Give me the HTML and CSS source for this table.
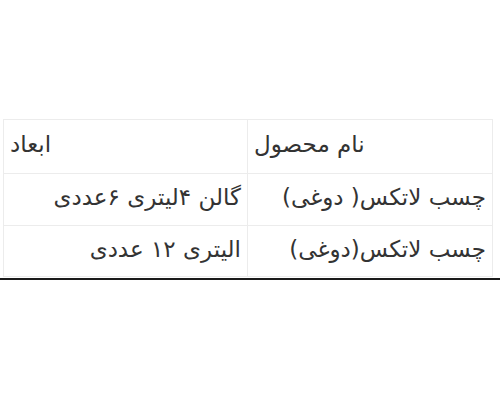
FILE: index.html
```html
<!DOCTYPE html>
<html lang="fa" dir="rtl">
<head>
<meta charset="utf-8">
<link rel="stylesheet" href="styles.css">
</head>
<body>
<div class="page">
  <table class="spec">
    <tr class="head">
      <th class="name">نام محصول</th>
      <th class="dim">ابعاد</th>
    </tr>
    <tr class="r1">
      <td class="name">چسب لاتکس( دوغی)</td>
      <td class="dim">گالن ۴لیتری ۶عددی</td>
    </tr>
    <tr class="r2">
      <td class="name">چسب لاتکس(دوغی)</td>
      <td class="dim">الیتری ۱۲ عددی</td>
    </tr>
  </table>
  <div class="rule"></div>
</div>
</body>
</html>
```
FILE: styles.css
```css
html, body {
  margin: 0;
  padding: 0;
  background: #ffffff;
}
.page {
  width: 500px;
  height: 400px;
  padding-top: 119px;
  box-sizing: border-box;
  font-family: "DejaVu Sans", "Noto Sans", sans-serif;
  color: #333333;
}
.spec {
  border-collapse: collapse;
  margin-right: 7px;
  width: 490px;
  table-layout: fixed;
}
.spec th, .spec td {
  border: 1px solid #ececec;
  font-size: 23px;
  font-weight: normal;
  padding: 0 6px 5px 6px;
  vertical-align: middle;
  white-space: nowrap;
}
.spec th {
  text-align: left;
}
.spec td {
  text-align: right;
}
.spec .name {
  width: 232px;
}
.head { height: 54px; }
.r1 { height: 52px; }
.r2 { height: 51px; }
.rule {
  margin-top: 1px;
  height: 2px;
  background: #1a1a1a;
  width: 500px;
}
```
